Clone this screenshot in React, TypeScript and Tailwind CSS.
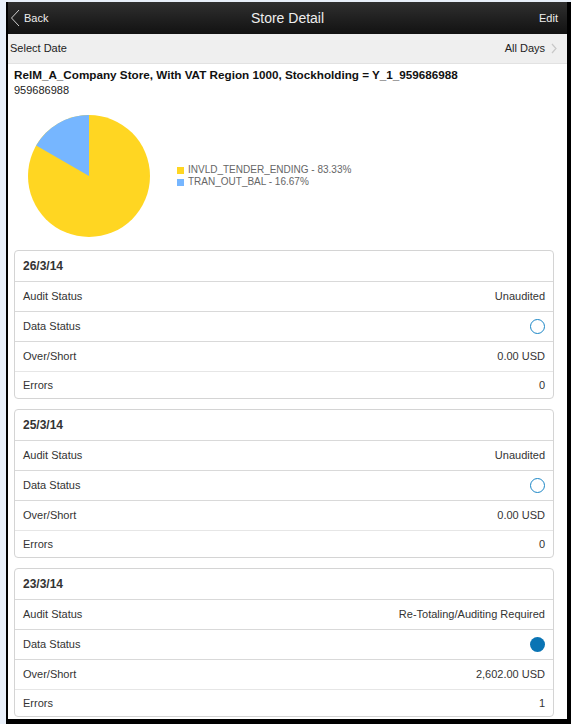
import React from 'react'

type Row = { label: string; value?: string; status?: 'empty' | 'filled' }
type Day = { date: string; rows: Row[] }

const days: Day[] = [
	{
		date: '26/3/14',
		rows: [
			{ label: 'Audit Status', value: 'Unaudited' },
			{ label: 'Data Status', status: 'empty' },
			{ label: 'Over/Short', value: '0.00 USD' },
			{ label: 'Errors', value: '0' },
		],
	},
	{
		date: '25/3/14',
		rows: [
			{ label: 'Audit Status', value: 'Unaudited' },
			{ label: 'Data Status', status: 'empty' },
			{ label: 'Over/Short', value: '0.00 USD' },
			{ label: 'Errors', value: '0' },
		],
	},
	{
		date: '23/3/14',
		rows: [
			{ label: 'Audit Status', value: 'Re-Totaling/Auditing Required' },
			{ label: 'Data Status', status: 'filled' },
			{ label: 'Over/Short', value: '2,602.00 USD' },
			{ label: 'Errors', value: '1' },
		],
	},
]

function Pie() {
	// 16.67% slice, from 12 o'clock going counter-clockwise
	const cx = 62
	const cy = 62
	const r = 61
	const a = (60 * Math.PI) / 180
	const x = cx - r * Math.sin(a)
	const y = cy - r * Math.cos(a)
	return (
		<svg width="124" height="124" viewBox="0 0 124 124">
			<circle cx={cx} cy={cy} r={r} fill="#ffd622" />
			<path d={`M${cx} ${cy} L${cx} ${cy - r} A${r} ${r} 0 0 0 ${x} ${y} Z`} fill="#76b6ff" />
		</svg>
	)
}

function StatusDot({ filled }: { filled: boolean }) {
	return filled ? (
		<span className="block w-[15px] h-[15px] rounded-full bg-[#0a74b4]" />
	) : (
		<span className="block w-[15px] h-[15px] rounded-full border border-[#1b86c6]" />
	)
}

function DayCard({ day }: { day: Day }) {
	return (
		<section className="border border-[#d4d4d4] rounded-[4px] bg-white">
			<div className="h-[30px] flex items-center px-[8px] text-[12px] font-bold text-[#333]">{day.date}</div>
			{day.rows.map((r, i) => (
				<div
					key={r.label}
					className={`flex items-center justify-between px-[8px] border-t ${i === 3 ? 'h-[27px] border-[#e6e6e6]' : 'h-[30px] border-[#d9d9d9]'}`}
				>
					<span className="text-[11px] text-[#333]">{r.label}</span>
					{r.status ? (
						<StatusDot filled={r.status === 'filled'} />
					) : (
						<span className="text-[11px] text-[#333]">{r.value}</span>
					)}
				</div>
			))}
		</section>
	)
}

export default function App() {
	return (
		<div
			className="w-[571px] h-[724px] bg-[#e9f0fa] pl-[6px] pt-[2px] flex overflow-hidden"
			style={{ fontFamily: '"Liberation Sans", Arial, sans-serif' }}
		>
			<div className="flex-1 flex flex-col bg-white border-l-2 border-r-[4px] border-b-[5px] border-black overflow-hidden">
				<header className="h-[32px] shrink-0 flex items-center justify-between bg-gradient-to-b from-[#303030] to-[#121212] text-white">
					<div className="flex items-center gap-[4px] pl-[2px] w-[80px]">
						<svg width="10" height="18" viewBox="0 0 10 18">
							<path d="M9 1 L1.5 9 L9 17" fill="none" stroke="#cfcfcf" strokeWidth="1" />
						</svg>
						<span className="text-[11px] text-[#eee]">Back</span>
					</div>
					<h1 className="text-[14px] text-[#eee]">Store Detail</h1>
					<div className="w-[80px] flex justify-end pr-[9px] text-[11px] text-[#eee]">Edit</div>
				</header>

				<div className="h-[30px] shrink-0 flex items-center justify-between pl-[2px] pr-[10px] bg-[#efefef] border-b border-[#e2e2e2]">
					<span className="text-[11px] text-[#222]">Select Date</span>
					<span className="flex items-center gap-[6px] text-[11px] text-[#222]">
						All Days
						<svg width="6" height="11" viewBox="0 0 6 11">
							<path d="M1 1 L5 5.5 L1 10" fill="none" stroke="#c8c8c8" strokeWidth="1.2" />
						</svg>
					</span>
				</div>

				<div className="flex-1 flex flex-col pl-[6px] pr-[13px]">
					<div className="pt-[3px]">
						<h2 className="text-[11.7px] font-bold text-[#111] leading-[16px]">
							RelM_A_Company Store, With VAT Region 1000, Stockholding = Y_1_959686988
						</h2>
						<p className="text-[11px] text-[#222] leading-[14px]">959686988</p>
					</div>

					<div className="flex items-center pt-[17px] pl-[13px] pb-[12px]">
						<Pie />
						<ul className="ml-[26px] flex flex-col text-[10px] text-[#666] leading-[12px]">
							<li className="flex items-center gap-[4px]">
								<span className="w-[7px] h-[7px] bg-[#ffd622]" />
								INVLD_TENDER_ENDING - 83.33%
							</li>
							<li className="flex items-center gap-[4px]">
								<span className="w-[7px] h-[7px] bg-[#76b6ff]" />
								TRAN_OUT_BAL - 16.67%
							</li>
						</ul>
					</div>

					<div className="flex flex-col gap-[10px]">
						{days.map((d) => (
							<DayCard key={d.date} day={d} />
						))}
					</div>
				</div>
			</div>
		</div>
	)
}
